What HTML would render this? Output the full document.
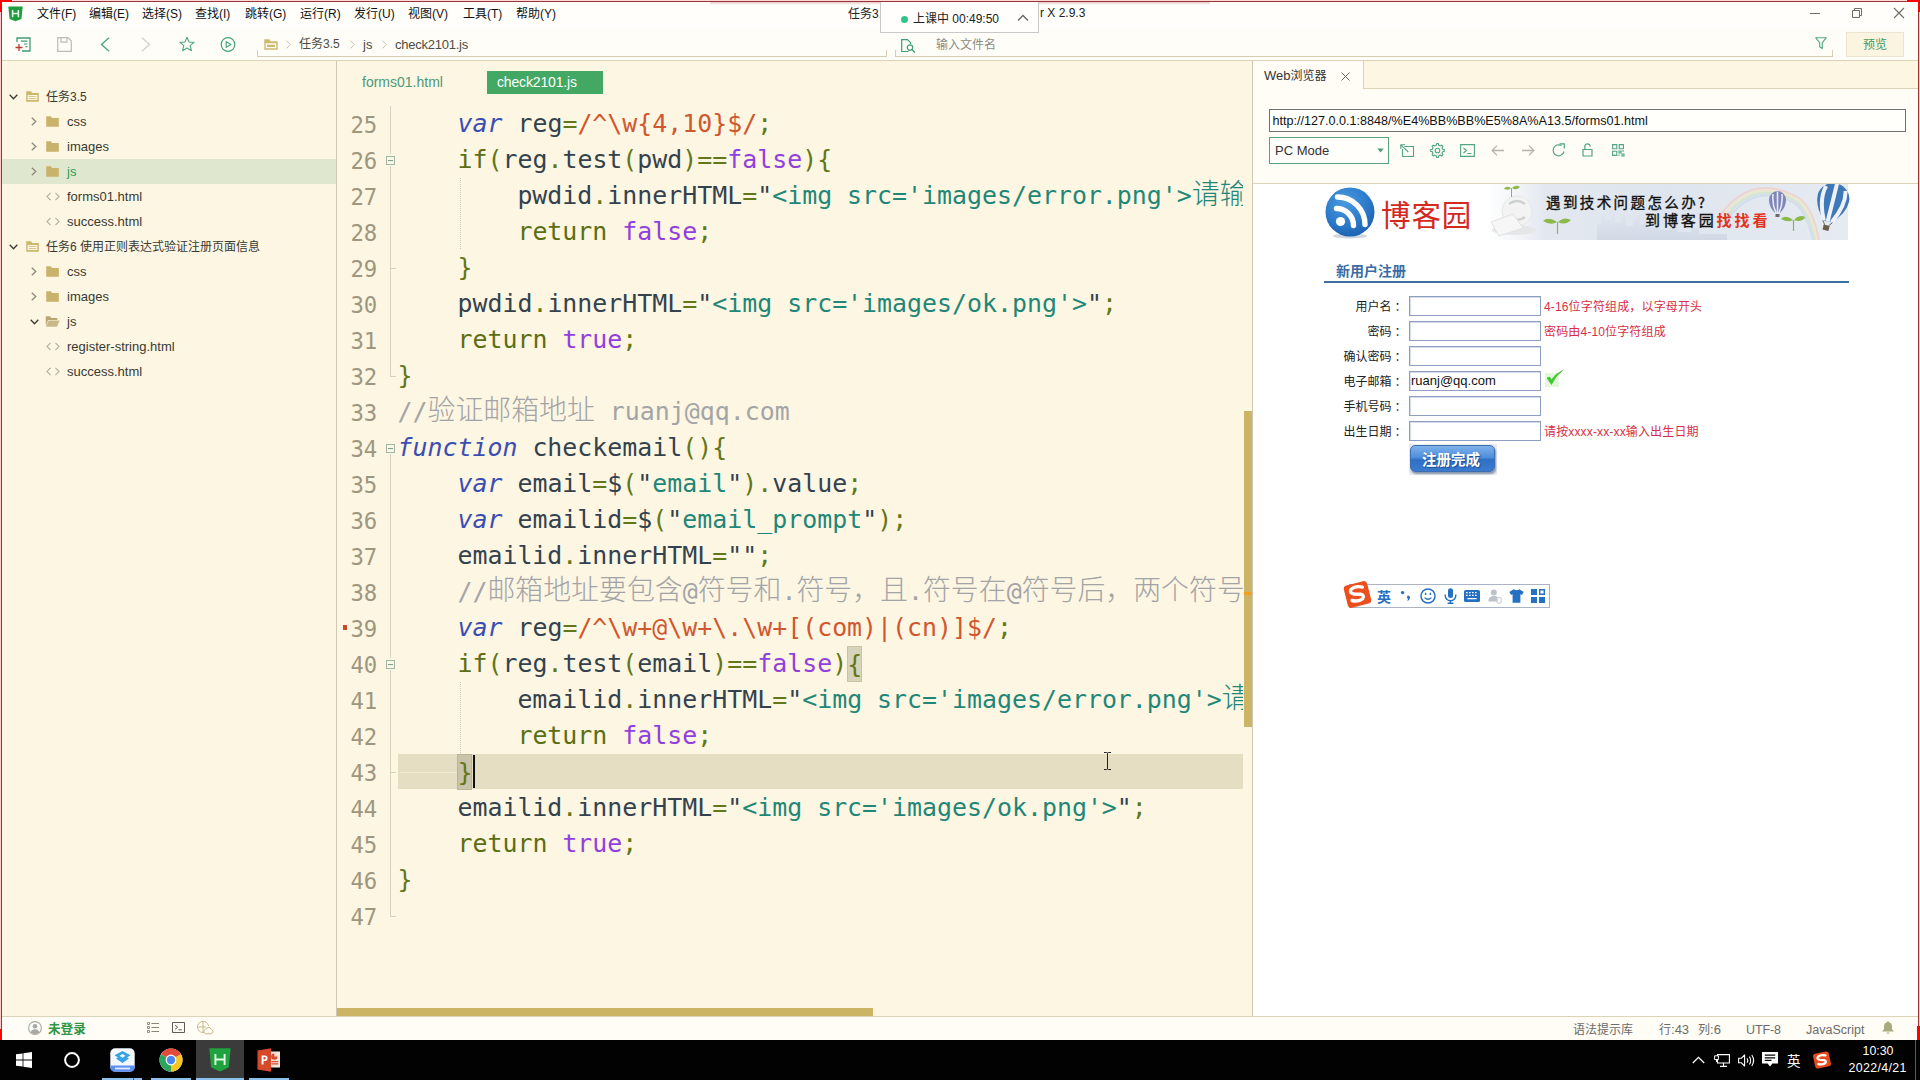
<!DOCTYPE html>
<html lang="zh-CN">
<head>
<meta charset="utf-8">
<title>HBuilder X</title>
<style>
*{box-sizing:border-box;margin:0;padding:0}
html,body{width:1920px;height:1080px;overflow:hidden;background:#fffdf6}
body{position:relative;font-family:"Liberation Sans","Noto Sans CJK SC",sans-serif;font-size:12px;color:#333}
.abs{position:absolute}
svg{position:absolute;overflow:visible}
/* ---------- frame ---------- */
#menubar{left:0;top:0;width:1920px;height:28px;background:#fffefb;z-index:5}
#toolbar{left:0;top:28px;width:1920px;height:32px;background:#fffdf7}
#hdiv{left:2px;top:60px;width:1916px;height:1px;background:#ddd3b8}
.menu{position:absolute;top:6px;font-size:12px;line-height:17px;color:#111;white-space:nowrap}
#title1{left:848px;top:6px;font-size:12px;line-height:17px;color:#222;white-space:nowrap}
#title2{left:1040px;top:5px;font-size:12px;line-height:16px;color:#222;white-space:nowrap}
#classpop{left:880px;top:0;width:159px;height:33px;background:#fffefc;border:1px solid #c9c9c9;border-top:none}
#classpop .dot{position:absolute;left:20px;top:16px;width:7px;height:7px;border-radius:50%;background:#2fc58a}
#classpop .t{position:absolute;left:32px;top:11px;font-size:12px;line-height:16px;color:#222;white-space:nowrap}
.bc{top:8px;font-size:13px;line-height:17px;color:#4c4c44;white-space:nowrap}
/* ---------- sidebar ---------- */
#sidebar{left:2px;top:61px;width:334px;height:955px;background:#fdf6e3}
#sideline{left:336px;top:61px;width:1px;height:955px;background:#cfc9b3}
.row{position:absolute;left:0;width:334px;height:25px}
.row.sel{background:#dfe8cf}
.row .tx{position:absolute;top:4px;font-size:13px;line-height:17px;color:#3a3a32;white-space:nowrap}
.row.sel .tx{color:#2f9a57}
.zh{font-size:12px !important}
.row .tx.zh{top:5px}
/* ---------- editor ---------- */
#editor{left:337px;top:61px;width:915px;height:955px;background:#fdf6e3;overflow:hidden}
#edline{left:1252px;top:61px;width:1px;height:955px;background:#cfc9b3}
.tab{position:absolute;font-size:14px;line-height:17px;white-space:nowrap}
#code{position:absolute;left:0;top:45px;width:906px;height:830px;overflow:hidden}
.ln{position:absolute;left:0;height:36px;width:906px;white-space:pre}
.num{position:absolute;left:13.5px;top:0.5px;font-family:"DejaVu Sans Mono","Liberation Mono",monospace;font-size:22.3px;line-height:36px;color:#9d977f;letter-spacing:-0.2px}
.src{position:absolute;left:60.5px;top:0;font-family:"DejaVu Sans Mono","Liberation Mono",monospace;font-size:24.9px;line-height:36px;color:#33424d;white-space:pre;letter-spacing:0}
.src i,.src b,.src u,.src s,.src em,.src q,.src a{font-style:normal;font-weight:normal;text-decoration:none}
.src .k{color:#3b4db3;font-style:italic}
.src .c{color:#5a6e12}
.src .p{color:#62771a}
.src .s{color:#1f8777}
.src .r{color:#d1572f}
.src .v{color:#9140dd}
.src .m{color:#a3a4a6}
.src .z{font-family:"Noto Sans CJK SC",sans-serif;font-size:27.9px;letter-spacing:0;line-height:0;font-weight:300}
.src .br{background:#d8d3bb;outline:1px solid #c9c3a6;outline-offset:-1px;padding:3.5px 0}
.src .br2{background:#c9c4a9;outline-color:#b9b498}
/* ---------- right panel ---------- */
#right{left:1253px;top:61px;width:665px;height:955px;background:#fffdf6}
#web{left:1254px;top:184px;width:664px;height:832px;background:#fff;overflow:hidden}
.lab{position:absolute;margin-top:1.5px;margin-left:1.5px;width:80px;text-align:right;font-family:"Liberation Sans","Noto Sans CJK SC",sans-serif;font-size:12px;line-height:16px;color:#222;white-space:nowrap}
.inp{position:absolute;left:155px;width:132px;height:20px;border:1px solid #8f9fc4;background:#fff;box-shadow:inset 1px 1px 0 #d7dcea}
.hint{position:absolute;margin-top:1.5px;left:290px;font-size:12px;line-height:16px;color:#d62f45;letter-spacing:0.15px;white-space:nowrap}
/* ---------- status & taskbar ---------- */
#status{left:2px;top:1016px;width:1916px;height:24px;background:#fffdf5;border-top:1px solid #ddd3b8}
.st{position:absolute;top:4.5px;font-size:12px;line-height:16px;color:#6b6b6b;white-space:nowrap}
#taskbar{left:0;top:1040px;width:1920px;height:40px;background:#020202}
</style>
</head>
<body>
<!-- menubar -->
<div id="menubar" class="abs">
<svg style="left:8px;top:6px" width="15" height="16" viewBox="0 0 15 17" preserveAspectRatio="none"><path d="M0.3 0.6 H14.7 L13.4 13.8 L7.5 16.2 L1.6 13.8 Z" fill="#1f9c3f"/><path d="M4.6 4.2 V12 M10.4 4.2 V12 M4.6 8 H10.4" stroke="#e9ffe9" stroke-width="1.5" fill="none"/></svg>
<span class="menu" style="left:37px">文件(F)</span>
<span class="menu" style="left:89px">编辑(E)</span>
<span class="menu" style="left:142px">选择(S)</span>
<span class="menu" style="left:195px">查找(I)</span>
<span class="menu" style="left:245px">跳转(G)</span>
<span class="menu" style="left:300px">运行(R)</span>
<span class="menu" style="left:354px">发行(U)</span>
<span class="menu" style="left:408px">视图(V)</span>
<span class="menu" style="left:463px">工具(T)</span>
<span class="menu" style="left:516px">帮助(Y)</span>
<span id="title1" class="abs" style="width:32px;overflow:hidden">任务3.5/js/check2101.js - HBuilde</span><span id="title2" class="abs">r X 2.9.3</span>
<div class="abs" style="left:710px;top:2px;width:500px;height:3px;background:linear-gradient(#e9c9c9,rgba(255,240,240,0))"></div>
<div id="classpop" class="abs"><span class="dot"></span><span class="t">上课中 00:49:50</span>
<svg style="left:136px;top:14px" width="12" height="8" viewBox="0 0 12 8"><path d="M1 6.5 L6 1.5 L11 6.5" stroke="#666" stroke-width="1.3" fill="none"/></svg></div>
<svg style="left:1810px;top:8px" width="100" height="12" viewBox="0 0 100 12"><path d="M0 5.5 H10" stroke="#6e6e64" stroke-width="1"/><path d="M42.5 2.5 H49.5 V9.5 H42.5 Z M44.5 2.5 V0.5 H51.5 V7.5 H49.5" stroke="#6e6e64" stroke-width="1" fill="none"/><path d="M84 0 L94 10 M94 0 L84 10" stroke="#6e6e64" stroke-width="1.1"/></svg>
</div>
<div id="toolbar" class="abs">
<!-- new file -->
<svg style="left:15px;top:9px" width="16" height="15" viewBox="0 0 16 15"><path d="M2 5 V1 H15 V14 H7" stroke="#3f9a7a" stroke-width="1.3" fill="none"/><path d="M6 4.2 H12.5 M9 7 H12.5 M10.5 9.6 H12.5" stroke="#3f9a7a" stroke-width="1.2"/><path d="M0.5 10.5 H7.5 M4 7 V14" stroke="#c0392b" stroke-width="1.3"/></svg>
<!-- save -->
<svg style="left:57px;top:9px" width="15" height="15" viewBox="0 0 15 15"><path d="M0.7 0.7 H11 L14.3 4 V14.3 H0.7 Z" stroke="#bcbcb2" stroke-width="1.2" fill="none"/><path d="M4 0.7 V5.2 H10 V0.7" stroke="#bcbcb2" stroke-width="1.2" fill="none"/></svg>
<!-- back / forward -->
<svg style="left:100px;top:9px" width="10" height="15" viewBox="0 0 10 15"><path d="M9 0.8 L1.5 7.5 L9 14.2" stroke="#4fa585" stroke-width="1.4" fill="none"/></svg>
<svg style="left:141px;top:9px" width="10" height="15" viewBox="0 0 10 15"><path d="M1 0.8 L8.5 7.5 L1 14.2" stroke="#d3d3cb" stroke-width="1.4" fill="none"/></svg>
<!-- star -->
<svg style="left:179px;top:8px" width="16" height="16" viewBox="0 0 16 16"><path d="M8 1.2 L10 6 L15 6.4 L11.2 9.7 L12.4 14.7 L8 12 L3.6 14.7 L4.8 9.7 L1 6.4 L6 6 Z" stroke="#4fa585" stroke-width="1.1" fill="none" stroke-linejoin="round"/></svg>
<!-- run -->
<svg style="left:220px;top:9px" width="16" height="16" viewBox="0 0 16 16"><circle cx="8" cy="7.5" r="6.8" stroke="#3fa573" stroke-width="1.2" fill="none"/><path d="M6.2 4.6 L10.8 7.5 L6.2 10.4 Z" stroke="#3fa573" stroke-width="1.1" fill="none" stroke-linejoin="round"/></svg>
<!-- address bracket -->
<div class="abs" style="left:257px;top:22px;width:1px;height:7px;background:#d6cdb0"></div>
<div class="abs" style="left:257px;top:28px;width:630px;height:1px;background:#d6cdb0"></div>
<div class="abs" style="left:886px;top:22px;width:1px;height:7px;background:#d6cdb0"></div>
<svg style="left:264px;top:11px" width="14" height="11" viewBox="0 0 14 11"><path d="M0.3 0.3 H5.2 L6.6 2.2 H13.7 V10.7 H0.3 Z" fill="#cdb96b"/><path d="M2.3 5 H11.6 V8.6 H2.3 Z" fill="none" stroke="#fffdf7" stroke-width="1.3"/></svg>
<svg style="left:286px;top:12px" width="5" height="9" viewBox="0 0 5 9"><path d="M0.6 0.6 L4.2 4.5 L0.6 8.4" stroke="#c5c2b6" stroke-width="1" fill="none"/></svg>
<span class="abs bc zh" style="left:299px">任务3.5</span>
<svg style="left:350px;top:12px" width="5" height="9" viewBox="0 0 5 9"><path d="M0.6 0.6 L4.2 4.5 L0.6 8.4" stroke="#c5c2b6" stroke-width="1" fill="none"/></svg>
<span class="abs bc" style="left:363px">js</span>
<svg style="left:382px;top:12px" width="5" height="9" viewBox="0 0 5 9"><path d="M0.6 0.6 L4.2 4.5 L0.6 8.4" stroke="#c5c2b6" stroke-width="1" fill="none"/></svg>
<span class="abs bc" style="left:395px;letter-spacing:-0.25px">check2101.js</span>
<!-- search bracket -->
<div class="abs" style="left:895px;top:22px;width:1px;height:7px;background:#d6cdb0"></div>
<div class="abs" style="left:895px;top:28px;width:938px;height:1px;background:#d6cdb0"></div>
<div class="abs" style="left:1832px;top:22px;width:1px;height:7px;background:#d6cdb0"></div>
<svg style="left:901px;top:11px" width="15" height="14" viewBox="0 0 15 14"><path d="M7.5 12.5 H0.7 V0.7 H6.5 L9.5 3.7 V5" stroke="#3f9a7a" stroke-width="1.2" fill="none"/><circle cx="9" cy="8.6" r="2.7" stroke="#3f9a7a" stroke-width="1.2" fill="none"/><path d="M11 10.7 L14 13.5" stroke="#3f9a7a" stroke-width="1.3"/></svg>
<span class="abs" style="left:936px;top:9px;font-size:12px;line-height:17px;color:#8c8c84;white-space:nowrap">输入文件名</span>
<svg style="left:1815px;top:9px" width="12" height="13" viewBox="0 0 12 13"><path d="M0.8 0.8 H11.2 L7.3 5.6 V11.6 L4.7 9.8 V5.6 Z" stroke="#4fa585" stroke-width="1.1" fill="none" stroke-linejoin="round"/></svg>
<div class="abs" style="left:1846px;top:4px;width:58px;height:25px;background:#fbf4e0;border:1px solid #ebe4cf"></div>
<span class="abs" style="left:1863px;top:9px;font-size:12px;line-height:17px;color:#3e9c63;white-space:nowrap">预览</span>
</div>
<div id="hdiv" class="abs"></div>

<!-- sidebar -->
<div id="sidebar" class="abs">
<div class="row" style="top:23px"><svg style="left:7px;top:10px" width="9" height="6" viewBox="0 0 9 6"><path d="M0.7 0.8 L4.5 4.8 L8.3 0.8" stroke="#3c3a30" stroke-width="1.3" fill="none"/></svg><svg style="left:24px;top:7px" width="13" height="11" viewBox="0 0 13 11"><path d="M0.2 0.2 H4.8 L6.2 2 H12.8 V10.8 H0.2 Z" fill="#ccb86c"/><path d="M2.2 4.6 H10.8 V8.4 H2.2 Z M2.2 6.5 H10.8" fill="none" stroke="#fdf6e3" stroke-width="1.1"/></svg><span class="tx zh" style="left:44px">任务3.5</span></div>
<div class="row" style="top:48px"><svg style="left:29px;top:8px" width="6" height="9" viewBox="0 0 6 9"><path d="M0.8 0.7 L4.8 4.5 L0.8 8.3" stroke="#8e8a78" stroke-width="1.3" fill="none"/></svg><svg style="left:44px;top:7px" width="13" height="11" viewBox="0 0 13 11"><path d="M0.2 0.2 H4.8 L6.2 2 H12.8 V10.8 H0.2 Z" fill="#c9b26a"/></svg><span class="tx" style="left:65px">css</span></div>
<div class="row" style="top:73px"><svg style="left:29px;top:8px" width="6" height="9" viewBox="0 0 6 9"><path d="M0.8 0.7 L4.8 4.5 L0.8 8.3" stroke="#8e8a78" stroke-width="1.3" fill="none"/></svg><svg style="left:44px;top:7px" width="13" height="11" viewBox="0 0 13 11"><path d="M0.2 0.2 H4.8 L6.2 2 H12.8 V10.8 H0.2 Z" fill="#c9b26a"/></svg><span class="tx" style="left:65px">images</span></div>
<div class="row sel" style="top:98px"><svg style="left:29px;top:8px" width="6" height="9" viewBox="0 0 6 9"><path d="M0.8 0.7 L4.8 4.5 L0.8 8.3" stroke="#8e8a78" stroke-width="1.3" fill="none"/></svg><svg style="left:44px;top:7px" width="13" height="11" viewBox="0 0 13 11"><path d="M0.2 0.2 H4.8 L6.2 2 H12.8 V10.8 H0.2 Z" fill="#c9b26a"/></svg><span class="tx" style="left:65px">js</span></div>
<div class="row" style="top:123px"><svg style="left:44px;top:8px" width="14" height="9" viewBox="0 0 14 9"><path d="M4.6 0.8 L0.9 4.5 L4.6 8.2 M9.4 0.8 L13.1 4.5 L9.4 8.2" stroke="#b4b09e" stroke-width="1.1" fill="none"/></svg><span class="tx" style="left:65px">forms01.html</span></div>
<div class="row" style="top:148px"><svg style="left:44px;top:8px" width="14" height="9" viewBox="0 0 14 9"><path d="M4.6 0.8 L0.9 4.5 L4.6 8.2 M9.4 0.8 L13.1 4.5 L9.4 8.2" stroke="#b4b09e" stroke-width="1.1" fill="none"/></svg><span class="tx" style="left:65px">success.html</span></div>
<div class="row" style="top:173px"><svg style="left:7px;top:10px" width="9" height="6" viewBox="0 0 9 6"><path d="M0.7 0.8 L4.5 4.8 L8.3 0.8" stroke="#3c3a30" stroke-width="1.3" fill="none"/></svg><svg style="left:24px;top:7px" width="13" height="11" viewBox="0 0 13 11"><path d="M0.2 0.2 H4.8 L6.2 2 H12.8 V10.8 H0.2 Z" fill="#ccb86c"/><path d="M2.2 4.6 H10.8 V8.4 H2.2 Z M2.2 6.5 H10.8" fill="none" stroke="#fdf6e3" stroke-width="1.1"/></svg><span class="tx zh" style="left:44px">任务6 使用正则表达式验证注册页面信息</span></div>
<div class="row" style="top:198px"><svg style="left:29px;top:8px" width="6" height="9" viewBox="0 0 6 9"><path d="M0.8 0.7 L4.8 4.5 L0.8 8.3" stroke="#8e8a78" stroke-width="1.3" fill="none"/></svg><svg style="left:44px;top:7px" width="13" height="11" viewBox="0 0 13 11"><path d="M0.2 0.2 H4.8 L6.2 2 H12.8 V10.8 H0.2 Z" fill="#c9b26a"/></svg><span class="tx" style="left:65px">css</span></div>
<div class="row" style="top:223px"><svg style="left:29px;top:8px" width="6" height="9" viewBox="0 0 6 9"><path d="M0.8 0.7 L4.8 4.5 L0.8 8.3" stroke="#8e8a78" stroke-width="1.3" fill="none"/></svg><svg style="left:44px;top:7px" width="13" height="11" viewBox="0 0 13 11"><path d="M0.2 0.2 H4.8 L6.2 2 H12.8 V10.8 H0.2 Z" fill="#c9b26a"/></svg><span class="tx" style="left:65px">images</span></div>
<div class="row" style="top:248px"><svg style="left:28px;top:10px" width="9" height="6" viewBox="0 0 9 6"><path d="M0.7 0.8 L4.5 4.8 L8.3 0.8" stroke="#3c3a30" stroke-width="1.3" fill="none"/></svg><svg style="left:43px;top:7px" width="15" height="11" viewBox="0 0 15 11"><path d="M0.8 0.3 H5 L6.3 2 H12.3 V4 H3.2 L0.8 9.6 Z" fill="#b9a772"/><path d="M3.6 4.6 H14.6 L12 10.8 H0.8 Z" fill="#c9b88a"/></svg><span class="tx" style="left:65px">js</span></div>
<div class="row" style="top:273px"><svg style="left:44px;top:8px" width="14" height="9" viewBox="0 0 14 9"><path d="M4.6 0.8 L0.9 4.5 L4.6 8.2 M9.4 0.8 L13.1 4.5 L9.4 8.2" stroke="#b4b09e" stroke-width="1.1" fill="none"/></svg><span class="tx" style="left:65px">register-string.html</span></div>
<div class="row" style="top:298px"><svg style="left:44px;top:8px" width="14" height="9" viewBox="0 0 14 9"><path d="M4.6 0.8 L0.9 4.5 L4.6 8.2 M9.4 0.8 L13.1 4.5 L9.4 8.2" stroke="#b4b09e" stroke-width="1.1" fill="none"/></svg><span class="tx" style="left:65px">success.html</span></div>
</div>
<div id="sideline" class="abs"></div>

<!-- editor -->
<div id="editor" class="abs">
<span class="tab" style="left:25px;top:13px;color:#4b9a79">forms01.html</span>
<div class="abs" style="left:150px;top:10px;width:116px;height:23px;background:#43a863"></div>
<span class="tab" style="left:160px;top:13px;color:#fff;letter-spacing:-0.15px">check2101.js</span>
<div id="code">
<div class="abs" style="left:61px;top:648px;width:845px;height:35px;background:#e5dec2"></div>
<div class="abs" style="left:53px;top:0px;width:1px;height:48px;background:#d8d1b9"></div>
<div class="abs" style="left:49px;top:50px;width:9px;height:9px;border:1px solid #9fb8a8;background:#fdf6e3"><div style="position:absolute;left:1px;top:3px;width:5px;height:1px;background:#7fa08c"></div></div>
<div class="abs" style="left:53px;top:60px;width:1px;height:210px;background:#d8d1b9"></div>
<div class="abs" style="left:53px;top:162px;width:6px;height:1px;background:#d8d1b9"></div>
<div class="abs" style="left:53px;top:270px;width:6px;height:1px;background:#d8d1b9"></div>
<div class="abs" style="left:49px;top:338px;width:9px;height:9px;border:1px solid #9fb8a8;background:#fdf6e3"><div style="position:absolute;left:1px;top:3px;width:5px;height:1px;background:#7fa08c"></div></div>
<div class="abs" style="left:53px;top:348px;width:1px;height:204px;background:#d8d1b9"></div>
<div class="abs" style="left:49px;top:554px;width:9px;height:9px;border:1px solid #9fb8a8;background:#fdf6e3"><div style="position:absolute;left:1px;top:3px;width:5px;height:1px;background:#7fa08c"></div></div>
<div class="abs" style="left:53px;top:564px;width:1px;height:246px;background:#d8d1b9"></div>
<div class="abs" style="left:53px;top:666px;width:6px;height:1px;background:#d8d1b9"></div>
<div class="abs" style="left:53px;top:810px;width:6px;height:1px;background:#d8d1b9"></div>
<div class="abs" style="left:123px;top:72px;width:1px;height:72px;background:repeating-linear-gradient(#cfc8b0 0 1px,transparent 1px 2px)"></div>
<div class="abs" style="left:123px;top:576px;width:1px;height:72px;background:repeating-linear-gradient(#cfc8b0 0 1px,transparent 1px 2px)"></div>
<div class="abs" style="left:63px;top:666px;width:57px;height:1px;background:#efe9d2"></div>
<div class="abs" style="left:136px;top:649px;width:2px;height:33px;background:#111"></div>
<div class="abs" style="left:6px;top:519px;width:4px;height:5px;background:#c8492c"></div>
<div class="ln" style="top:0px"><span class="num">25</span><span class="src">    <i class="k">var</i> reg<i class="p">=</i><i class="r">/^\w{4,10}$/</i><i class="p">;</i></span></div>
<div class="ln" style="top:36px"><span class="num">26</span><span class="src">    <i class="c">if</i><i class="p">(</i>reg<i class="p">.</i>test<i class="p">(</i>pwd<i class="p">)==</i><i class="v">false</i><i class="p">){</i></span></div>
<div class="ln" style="top:72px"><span class="num">27</span><span class="src">        pwdid<i class="p">.</i>innerHTML<i class="p">=</i>"<i class="s">&lt;img src='images/error.png'&gt;</i><i class="s z">请输入4</i></span></div>
<div class="ln" style="top:108px"><span class="num">28</span><span class="src">        <i class="c">return</i> <i class="v">false</i><i class="p">;</i></span></div>
<div class="ln" style="top:144px"><span class="num">29</span><span class="src">    <i class="p">}</i></span></div>
<div class="ln" style="top:180px"><span class="num">30</span><span class="src">    pwdid<i class="p">.</i>innerHTML<i class="p">=</i>"<i class="s">&lt;img src='images/ok.png'&gt;</i>"<i class="p">;</i></span></div>
<div class="ln" style="top:216px"><span class="num">31</span><span class="src">    <i class="c">return</i> <i class="v">true</i><i class="p">;</i></span></div>
<div class="ln" style="top:252px"><span class="num">32</span><span class="src"><i class="p">}</i></span></div>
<div class="ln" style="top:288px"><span class="num">33</span><span class="src"><i class="m">//</i><i class="m z">验证邮箱地址</i><i class="m"> ruanj@qq.com</i></span></div>
<div class="ln" style="top:324px"><span class="num">34</span><span class="src"><i class="k">function</i> checkemail<i class="p">(){</i></span></div>
<div class="ln" style="top:360px"><span class="num">35</span><span class="src">    <i class="k">var</i> email<i class="p">=</i>$<i class="p">(</i>"<i class="s">email</i>"<i class="p">).</i>value<i class="p">;</i></span></div>
<div class="ln" style="top:396px"><span class="num">36</span><span class="src">    <i class="k">var</i> emailid<i class="p">=</i>$<i class="p">(</i>"<i class="s">email_prompt</i>"<i class="p">);</i></span></div>
<div class="ln" style="top:432px"><span class="num">37</span><span class="src">    emailid<i class="p">.</i>innerHTML<i class="p">=</i>""<i class="p">;</i></span></div>
<div class="ln" style="top:468px"><span class="num">38</span><span class="src">    <i class="m">//</i><i class="m z">邮箱地址要包含</i><i class="m">@</i><i class="m z">符号和</i><i class="m">.</i><i class="m z">符号，且</i><i class="m">.</i><i class="m z">符号在</i><i class="m">@</i><i class="m z">符号后，两个符号之间</i></span></div>
<div class="ln" style="top:504px"><span class="num">39</span><span class="src">    <i class="k">var</i> reg<i class="p">=</i><i class="r">/^\w+@\w+\.\w+[(com)|(cn)]$/</i><i class="p">;</i></span></div>
<div class="ln" style="top:540px"><span class="num">40</span><span class="src">    <i class="c">if</i><i class="p">(</i>reg<i class="p">.</i>test<i class="p">(</i>email<i class="p">)==</i><i class="v">false</i><i class="p">)</i><i class="p br">{</i></span></div>
<div class="ln" style="top:576px"><span class="num">41</span><span class="src">        emailid<i class="p">.</i>innerHTML<i class="p">=</i>"<i class="s">&lt;img src='images/error.png'&gt;</i><i class="s z">请输入</i></span></div>
<div class="ln" style="top:612px"><span class="num">42</span><span class="src">        <i class="c">return</i> <i class="v">false</i><i class="p">;</i></span></div>
<div class="ln" style="top:648px"><span class="num">43</span><span class="src">    <i class="p br br2">}</i></span></div>
<div class="ln" style="top:684px"><span class="num">44</span><span class="src">    emailid<i class="p">.</i>innerHTML<i class="p">=</i>"<i class="s">&lt;img src='images/ok.png'&gt;</i>"<i class="p">;</i></span></div>
<div class="ln" style="top:720px"><span class="num">45</span><span class="src">    <i class="c">return</i> <i class="v">true</i><i class="p">;</i></span></div>
<div class="ln" style="top:756px"><span class="num">46</span><span class="src"><i class="p">}</i></span></div>
<div class="ln" style="top:792px"><span class="num">47</span><span class="src"></span></div>
</div>
<div class="abs" style="left:907px;top:350px;width:8px;height:316px;background:#cbb463"></div>
<div class="abs" style="left:907px;top:531px;width:9px;height:3px;background:#f0a020"></div>
<div class="abs" style="left:0;top:947px;width:536px;height:8px;background:#cbb463"></div>

<svg style="left:766px;top:691px" width="9" height="18" viewBox="0 0 9 18"><path d="M1 0.5 H3.5 Q4.5 0.5 4.5 1.5 Q4.5 0.5 5.5 0.5 H8 M4.5 1.5 V16.5 M1 17.5 H3.5 Q4.5 17.5 4.5 16.5 Q4.5 17.5 5.5 17.5 H8" stroke="#222" stroke-width="1" fill="none"/></svg>
</div>
<div id="edline" class="abs"></div>

<!-- right -->
<div id="right" class="abs">
<div class="abs" style="left:110px;top:0;width:555px;height:28px;background:#fdf6e3;border-left:1px solid #ddd3b8;border-bottom:1px solid #ddd3b8"></div>
<span class="abs" style="left:11px;top:6px;font-size:13px;line-height:17px;color:#333;white-space:nowrap">Web<span class="zh">浏览器</span></span>
<svg style="left:88px;top:11px" width="9" height="9" viewBox="0 0 9 9"><path d="M0.5 0.5 L8.5 8.5 M8.5 0.5 L0.5 8.5" stroke="#666" stroke-width="1"/></svg>
<div class="abs" style="left:16px;top:48px;width:637px;height:23px;background:#fffffc;border:1px solid #707070"></div>
<span class="abs" style="left:19.5px;top:52px;font-size:12.6px;line-height:17px;color:#111;white-space:nowrap;letter-spacing:0">http://127.0.0.1:8848/%E4%BB%BB%E5%8A%A13.5/forms01.html</span>
<div class="abs" style="left:16px;top:76px;width:120px;height:27px;background:#fffefa;border:1px solid #55a27e"></div>
<span class="abs" style="left:22px;top:81px;font-size:13px;line-height:17px;color:#333;white-space:nowrap">PC Mode</span>
<svg style="left:124px;top:87px" width="7" height="5" viewBox="0 0 7 5"><path d="M0.3 0.5 H6.7 L3.5 4.5 Z" fill="#4f9a78"/></svg>
<svg style="left:147px;top:83px" width="15" height="13" viewBox="0 0 15 13"><path d="M4.5 2.5 H13.5 V12.5 H2.5 V5" stroke="#4fa585" stroke-width="1.1" fill="none"/><path d="M0.8 0.8 L8.3 8 M0.8 5 V0.8 H5.2" stroke="#4fa585" stroke-width="1.1" fill="none"/></svg>
<svg style="left:177px;top:82px" width="15" height="15" viewBox="0 0 15 15"><path d="M6.26 2.35 L6.64 0.65 L8.36 0.65 L8.74 2.35 L10.27 2.98 L11.73 2.05 L12.95 3.27 L12.02 4.73 L12.65 6.26 L14.35 6.64 L14.35 8.36 L12.65 8.74 L12.02 10.27 L12.95 11.73 L11.73 12.95 L10.27 12.02 L8.74 12.65 L8.36 14.35 L6.64 14.35 L6.26 12.65 L4.73 12.02 L3.27 12.95 L2.05 11.73 L2.98 10.27 L2.35 8.74 L0.65 8.36 L0.65 6.64 L2.35 6.26 L2.98 4.73 L2.05 3.27 L3.27 2.05 L4.73 2.98 Z" stroke="#4fa585" stroke-width="1.1" fill="none" stroke-linejoin="round"/><circle cx="7.5" cy="7.5" r="2.3" stroke="#4fa585" stroke-width="1.1" fill="none"/></svg>
<svg style="left:207px;top:83px" width="15" height="13" viewBox="0 0 15 13"><path d="M0.6 0.6 H14.4 V12.4 H0.6 Z" stroke="#4fa585" stroke-width="1.1" fill="none"/><path d="M3.5 4 L6.5 6.5 L3.5 9 M7.5 9.5 H11.5" stroke="#4fa585" stroke-width="1.1" fill="none"/></svg>
<svg style="left:238px;top:83px" width="14" height="13" viewBox="0 0 14 13"><path d="M13 6.5 H1.2 M6 1.6 L1.2 6.5 L6 11.4" stroke="#b5b5ad" stroke-width="1.3" fill="none"/></svg>
<svg style="left:268px;top:83px" width="14" height="13" viewBox="0 0 14 13"><path d="M1 6.5 H12.8 M8 1.6 L12.8 6.5 L8 11.4" stroke="#b5b5ad" stroke-width="1.3" fill="none"/></svg>
<svg style="left:299px;top:82px" width="13" height="14" viewBox="0 0 13 14"><path d="M12 8.5 A5.5 5.5 0 1 1 9.5 2.6" stroke="#4fa585" stroke-width="1.2" fill="none"/><path d="M7.5 0.8 H12.3 V5.4" stroke="#4fa585" stroke-width="1.2" fill="none"/></svg>
<svg style="left:329px;top:82px" width="11" height="14" viewBox="0 0 11 14"><path d="M1 6.5 H10 V13 H1 Z" stroke="#4fa585" stroke-width="1.2" fill="none"/><path d="M2.8 6.5 V3.6 A2.7 2.7 0 0 1 8.2 3.4" stroke="#4fa585" stroke-width="1.2" fill="none"/></svg>
<svg style="left:359px;top:83px" width="12" height="12" viewBox="0 0 12 12"><path d="M0.6 0.6 H4.8 V4.8 H0.6 Z M7.2 0.6 H11.4 V4.8 H7.2 Z M0.6 7.2 H4.8 V11.4 H0.6 Z" stroke="#4fa585" stroke-width="1.1" fill="none"/><path d="M7 7 H9 V9 H7 Z M10 10 H12 V12 H10 Z M10 7 H12 M7 10.5 V12" stroke="#4fa585" stroke-width="1.1" fill="none"/></svg>
<div class="abs" style="left:0;top:122px;width:665px;height:1px;background:#ddd3b8"></div>
</div>
<div id="web" class="abs">
<!-- logo -->
<svg style="left:71px;top:2px" width="52" height="54" viewBox="0 0 52 54">
<defs><radialGradient id="lg" cx="0.4" cy="0.3" r="0.8"><stop offset="0" stop-color="#4a9ae0"/><stop offset="0.6" stop-color="#2a78c8"/><stop offset="1" stop-color="#1a5aa8"/></radialGradient></defs>
<ellipse cx="25" cy="50" rx="17" ry="2.5" fill="#cfd6de"/>
<circle cx="25" cy="26" r="24.5" fill="url(#lg)"/>
<circle cx="15.5" cy="35.5" r="4.6" fill="#fff"/>
<path d="M11.5 22.5 A17 17 0 0 1 28.5 39.5" stroke="#fff" stroke-width="5.4" fill="none" stroke-linecap="round"/>
<path d="M12.5 11 A27.5 27.5 0 0 1 40 38.5" stroke="#fff" stroke-width="5.4" fill="none" stroke-linecap="round"/>
</svg>
<span class="abs" style="left:127px;top:7.5px;font-family:'Noto Sans CJK SC',sans-serif;font-size:29.5px;line-height:42px;color:#d3291f;white-space:nowrap;font-weight:400;letter-spacing:0.9px">博客园</span>
<!-- banner -->
<div class="abs" style="left:233px;top:0;width:361px;height:56px;background:linear-gradient(90deg,#fff 0,#f3f5f8 8%,#e3e8f0 16%,#dfe5ee 50%,#e6ebf2 100%)"></div>
<svg style="left:233px;top:0" width="361" height="56" viewBox="0 0 361 56">
<defs><linearGradient id="sky" x1="0" y1="0" x2="0" y2="1"><stop offset="0" stop-color="#cdd6e4" stop-opacity="0"/><stop offset="1" stop-color="#c3cddd" stop-opacity="0.55"/></linearGradient></defs>
<path d="M110 56 V40 H114 V30 H118 V36 H124 V26 H128 V38 H134 V30 H139 V42 H146 V34 H150 V28 H153 V40 H160 V44 H168 V36 H173 V46 H184 V40 H190 V48 H204 V44 H212 V50 H240 V56 Z" fill="url(#sky)"/>
<!-- paper globe -->
<ellipse cx="27" cy="46" rx="22" ry="5" fill="#e4e6e8"/>
<circle cx="30" cy="27" r="15" fill="#f3f3f3" stroke="#e6e6e6" stroke-width="1"/>
<path d="M22 20 Q30 14 38 20 M22 33 Q30 39 38 33" stroke="#cfd2d2" stroke-width="2.5" fill="none"/>
<path d="M4 38 L26 30 L36 44 L12 52 Z" fill="#f6f6f6" stroke="#e2e2e2" stroke-width="1"/>
<!-- sprouts -->
<path d="M24 4 q-5 -3 -7 1 q5 2 7 -1 z M25 4 q4 -4 8 -1 q-4 4 -8 1 z" fill="#8db84a"/><path d="M24.5 4 V13" stroke="#9aa86a" stroke-width="1"/>
<path d="M70 38 q-9 -6 -14 -1 q8 5 14 1 z M71 38 q6 -6 13 -2 q-6 6 -13 2 z" fill="#8db84a"/><path d="M70.5 38 V50" stroke="#9aa86a" stroke-width="1.2"/>
<path d="M306 36 q-8 -6 -12 -1 q7 4 12 1 z M307 36 q5 -6 12 -3 q-5 6 -12 3 z" fill="#8db84a"/><path d="M306.5 36 V47" stroke="#9aa86a" stroke-width="1.2"/>
<!-- rainbow -->
<path d="M230 36 Q262 -14 312 14 Q326 24 332 56" stroke="#f4c6c0" stroke-width="2" fill="none" opacity="0.6"/>
<path d="M232 38 Q263 -11 311 16 Q324 26 330 56" stroke="#f3e6b4" stroke-width="2" fill="none" opacity="0.6"/>
<path d="M234 40 Q264 -8 310 18 Q322 28 328 56" stroke="#c9e3c2" stroke-width="2" fill="none" opacity="0.6"/>
<path d="M236 42 Q265 -5 309 20 Q320 30 326 56" stroke="#c4d4ee" stroke-width="2" fill="none" opacity="0.6"/>
<!-- balloons -->
<path d="M282 16 a8.5 9 0 0 1 17 0 q0 7 -6 13 h-5 q-6 -6 -6 -13 z" fill="#7f86b8"/><path d="M286 10 q-1 10 3 19 M290.5 7.5 V29 M295 10 q1 10 -3 19" stroke="#e6e8f4" stroke-width="1.6" fill="none"/><rect x="288.5" y="30" width="4" height="3" fill="#6a6a72"/>
<g transform="rotate(14 345 20)"><path d="M329 14 a16 15 0 0 1 32 0 q0 12 -12 24 h-8 q-12 -12 -12 -24 z" fill="#3f78b8"/><path d="M335 4 q-4 14 6 34 M345 -1 V38 M355 4 q4 14 -6 34" stroke="#eef2f8" stroke-width="4" fill="none"/><rect x="342" y="42" width="6" height="5" fill="#6a5a4a"/><path d="M340 38 L343 42 M350 38 L347 42" stroke="#555" stroke-width="0.8"/></g>
</svg>
<span class="abs" style="left:292px;top:7px;font-size:14.5px;line-height:22px;letter-spacing:2.4px;color:#111;font-weight:400;-webkit-text-stroke:0.35px #111;white-space:nowrap;font-family:'Noto Sans CJK SC',sans-serif">遇到技术问题怎么办?</span>
<span class="abs" style="left:391px;top:25px;font-size:15px;line-height:22px;letter-spacing:2.9px;color:#111;font-weight:400;-webkit-text-stroke:0.35px #111;white-space:nowrap;font-family:'Noto Sans CJK SC',sans-serif">到博客园<span style="color:#e23322;font-weight:700;-webkit-text-stroke:0">找找看</span></span>
<!-- heading -->
<span class="abs" style="left:82px;top:77px;font-size:14px;line-height:18px;font-weight:700;color:#3b6ca3;white-space:nowrap;font-family:'Noto Sans CJK SC',sans-serif">新用户注册</span>
<div class="abs" style="left:70px;top:97px;width:525px;height:2px;background:#3f6f9f"></div>
<span class="lab" style="left:68px;top:113px">用户名<span style="position:relative;left:3px">：</span></span>
<div class="inp" style="top:112px"></div>
<span class="hint" style="top:113px">4-16位字符组成，以字母开头</span>
<span class="lab" style="left:68px;top:138px">密码<span style="position:relative;left:3px">：</span></span>
<div class="inp" style="top:137px"></div>
<span class="hint" style="top:138px">密码由4-10位字符组成</span>
<span class="lab" style="left:68px;top:163px">确认密码<span style="position:relative;left:3px">：</span></span>
<div class="inp" style="top:162px"></div>
<span class="lab" style="left:68px;top:188px">电子邮箱<span style="position:relative;left:3px">：</span></span>
<div class="inp" style="top:187px"><span style="position:absolute;left:1px;top:0;font-family:'Liberation Sans',sans-serif;font-size:13px;line-height:17px;color:#111">ruanj@qq.com</span></div>
<span class="lab" style="left:68px;top:213px">手机号码<span style="position:relative;left:3px">：</span></span>
<div class="inp" style="top:212px"></div>
<span class="lab" style="left:68px;top:238px">出生日期<span style="position:relative;left:3px">：</span></span>
<div class="inp" style="top:237px"></div>
<span class="hint" style="top:238px">请按xxxx-xx-xx输入出生日期</span>
<!-- check -->
<div class="abs" style="left:291px;top:189px;width:14px;height:14px;background:#e4f6dc"></div>
<svg style="left:291px;top:185px" width="19" height="19" viewBox="0 0 19 19"><path d="M2 9 L6.5 15.5 Q10 7 17.5 1.5 Q10 5 6.5 11 L4.5 8 Z" fill="#3fc72e" stroke="#3fc72e" stroke-width="0.8" stroke-linejoin="round"/></svg>
<!-- ime toolbar -->
<div class="abs" style="left:95px;top:400px;width:201px;height:24px;background:#fff;border:1px solid #a9b4c6"></div>
<svg style="left:88px;top:395px" width="31" height="31" viewBox="0 0 31 31"><g transform="rotate(-14 15.5 15.5)"><rect x="3.5" y="4" width="24" height="23" rx="3.5" fill="#ea4f1e"/><path d="M22 9.5 Q15.5 6.2 10.6 9 Q7.4 12 12.4 14.2 L18.6 16 Q22.6 18 19.4 20.8 Q14.6 23.2 8.8 20" stroke="#fff" stroke-width="3.4" fill="none" stroke-linecap="round"/></g></svg>
<span class="abs" style="left:123px;top:402px;font-size:14px;line-height:20px;font-weight:700;color:#2470c2;white-space:nowrap;font-family:'Noto Sans CJK SC',sans-serif">英</span>
<svg style="left:146px;top:405px" width="12" height="14" viewBox="0 0 12 14"><circle cx="2.6" cy="3.6" r="1.7" fill="#2470c2"/><path d="M7.6 6.4 Q10.6 6.4 9.8 9.4 Q9.2 11.4 7 12 Q8.6 10.4 7.6 9.4 Q6.2 8.4 7.6 6.4 Z" fill="#2470c2"/></svg>
<svg style="left:166px;top:404px" width="16" height="16" viewBox="0 0 16 16"><circle cx="8" cy="8" r="7" stroke="#2470c2" stroke-width="1.5" fill="none"/><path d="M5.6 4.8 V7 M10.4 4.8 V7" stroke="#2470c2" stroke-width="1.4"/><path d="M4.6 9.6 Q8 13 11.4 9.6" stroke="#2470c2" stroke-width="1.3" fill="none"/></svg>
<svg style="left:190px;top:404px" width="13" height="16" viewBox="0 0 13 16"><rect x="4" y="0.3" width="5" height="9.6" rx="2.5" fill="#2470c2"/><path d="M1.2 6.6 V7.4 A5.3 5.3 0 0 0 11.8 7.4 V6.6" stroke="#2470c2" stroke-width="1.4" fill="none"/><path d="M6.5 12.6 V15 M3.6 15.3 H9.4" stroke="#2470c2" stroke-width="1.4"/></svg>
<svg style="left:210px;top:406px" width="16" height="12" viewBox="0 0 16 12"><rect x="0" y="0" width="16" height="12" rx="1.5" fill="#2470c2"/><path d="M2 2.6 H3.6 M5 2.6 H6.6 M8 2.6 H9.6 M11 2.6 H12.6 M2 5.4 H3.6 M5 5.4 H6.6 M8 5.4 H9.6 M11 5.4 H12.6 M3.4 8.6 H12.6" stroke="#fff" stroke-width="1.4"/></svg>
<svg style="left:234px;top:405px" width="14" height="15" viewBox="0 0 14 15"><circle cx="5.8" cy="3.4" r="3" fill="#bcc2cc"/><path d="M0.4 12.5 Q0.4 7 5.8 7 Q11.2 7 11.2 12.5 Z" fill="#bcc2cc"/><rect x="9" y="8.6" width="4.2" height="5.6" rx="0.8" fill="#fff" stroke="#bcc2cc" stroke-width="0.9"/></svg>
<svg style="left:255px;top:405px" width="15" height="14" viewBox="0 0 15 14"><path d="M4.6 0.3 Q7.5 2.4 10.4 0.3 L14.7 3 L12.8 6 L11.4 5.2 V13.7 H3.6 V5.2 L2.2 6 L0.3 3 Z" fill="#2470c2"/></svg>
<svg style="left:277px;top:405px" width="14" height="14" viewBox="0 0 14 14"><path d="M0 0 H6 V6 H0 Z M0 8 H6 V14 H0 Z M8 8 H14 V14 H8 Z" fill="#2470c2"/><path d="M8.7 0.7 H13.3 V5.3 H8.7 Z" fill="none" stroke="#2470c2" stroke-width="1.4"/></svg>
<!-- button -->
<div class="abs" style="left:155px;top:260px;width:88px;height:31px;background:#e9ebf0"></div>
<div class="abs" style="left:156px;top:261px;width:85px;height:27px;border-radius:5px;border:1px solid #3c6eb0;background:linear-gradient(#7fb1ea 0,#4f8fdc 45%,#2f6fc4 55%,#3a7ad0 100%);box-shadow:1px 2px 2px #8a94a8"></div>
<span class="abs" style="left:168px;top:265px;font-size:14.5px;line-height:19px;font-weight:700;color:#fff;white-space:nowrap;text-shadow:1px 1px 1px #1f4f90;font-family:'Noto Sans CJK SC',sans-serif">注册完成</span>
</div>

<!-- status -->
<div id="status" class="abs">
<svg style="left:26px;top:4px" width="14" height="14" viewBox="0 0 14 14"><circle cx="7" cy="7" r="6.4" stroke="#a9a9a3" stroke-width="1.1" fill="#fbfbf7"/><circle cx="7" cy="5.3" r="2.3" fill="#a9a9a3"/><path d="M2.8 11.6 Q3.2 8.2 7 8.2 Q10.8 8.2 11.2 11.6 Q9.4 13.2 7 13.2 Q4.6 13.2 2.8 11.6 Z" fill="#a9a9a3"/></svg>
<span class="abs" style="left:46px;top:1.5px;font-size:12.6px;line-height:17px;font-weight:700;color:#2f9645;white-space:nowrap;font-family:'Noto Sans CJK SC',sans-serif">未登录</span>
<svg style="left:145px;top:5px" width="12" height="11" viewBox="0 0 12 11"><path d="M0.5 0.5 H2.5 V2.5 H0.5 Z M0.5 4.5 H2.5 V6.5 H0.5 Z M0.5 8.5 H2.5 V10.5 H0.5 Z" stroke="#8a8674" stroke-width="0.9" fill="none"/><path d="M4.5 1.5 H12 M4.5 5.5 H12 M4.5 9.5 H12" stroke="#8a8674" stroke-width="1"/></svg>
<svg style="left:170px;top:5px" width="13" height="11" viewBox="0 0 13 11"><path d="M0.5 0.5 H12.5 V10.5 H0.5 Z" stroke="#5e5c50" stroke-width="1" fill="none"/><path d="M3 3 L5.6 5.2 L3 7.4 M6.5 7.8 H9.8" stroke="#5e5c50" stroke-width="1" fill="none"/></svg>
<svg style="left:195px;top:4px" width="17" height="14" viewBox="0 0 17 14"><path d="M8 11.2 A5.6 5.6 0 1 1 11.6 5" stroke="#c8b98c" stroke-width="1" fill="none"/><path d="M6 0.8 V11 M0.6 6 H9" stroke="#c8b98c" stroke-width="1" fill="none"/><path d="M8.5 12.8 H14 A2.3 2.3 0 0 0 14.2 8.3 A3 3 0 0 0 8.6 8.4 A2.3 2.3 0 0 0 8.5 12.8 Z" stroke="#c8b98c" stroke-width="1" fill="#fffdf5"/></svg>
<span class="st zh" style="left:1571px">语法提示库</span>
<span class="st" style="left:1657px;font-size:13px"><span class="zh">行</span>:43</span>
<span class="st" style="left:1696px;font-size:13px"><span class="zh">列</span>:6</span>
<span class="st" style="left:1744px;font-size:12.5px;letter-spacing:-0.1px">UTF-8</span>
<span class="st" style="left:1804px;font-size:12.5px">JavaScript</span>
<svg style="left:1880px;top:4px" width="12" height="13" viewBox="0 0 12 13"><path d="M6 0.3 Q6.8 0.3 6.9 1.2 Q10 2 10 5.5 V8.2 L11.7 10 V10.6 H0.3 V10 L2 8.2 V5.5 Q2 2 5.1 1.2 Q5.2 0.3 6 0.3 Z" fill="#a7aa7c"/><path d="M4.6 11.4 H7.4 Q7.2 12.7 6 12.7 Q4.8 12.7 4.6 11.4 Z" fill="#a7aa7c"/></svg>
</div>
<div id="taskbar" class="abs">
<div class="abs" style="left:196px;top:0;width:48px;height:38px;background:#3b3b3b"></div>
<!-- start -->
<svg style="left:16px;top:12px" width="16" height="16" viewBox="0 0 16 16"><path d="M0 2.3 L6.6 1.4 V7.6 H0 Z M7.4 1.3 L16 0 V7.6 H7.4 Z M0 8.4 H6.6 V14.6 L0 13.7 Z M7.4 8.4 H16 V16 L7.4 14.7 Z" fill="#fff"/></svg>
<!-- cortana -->
<svg style="left:64px;top:12px" width="16" height="16" viewBox="0 0 16 16"><circle cx="8" cy="8" r="6.9" stroke="#fff" stroke-width="2" fill="none"/></svg>
<!-- app1 -->
<svg style="left:110px;top:8px" width="25" height="24" viewBox="0 0 25 24"><rect x="0.3" y="0.3" width="24.4" height="23.4" rx="5" fill="#f4f8ff"/><path d="M0.3 17.5 H24.7 V19 Q24.7 23.7 19.7 23.7 H5.3 Q0.3 23.7 0.3 19 Z" fill="#5d8ff0"/><path d="M12.5 3 L20.5 7.2 L17 9.4 L19 10.6 L12.5 15 L6 10.6 L8 9.4 L4.5 7.2 Z" fill="#34a3e6"/><path d="M12.5 6 L15.5 7.8 L12.5 9.8 L9.5 7.8 Z" fill="#f4f8ff"/><path d="M5 19.6 H20 V21.4 H5 Z" fill="#dfe9ff"/></svg>
<!-- chrome -->
<svg style="left:159px;top:8px" width="24" height="24" viewBox="0 0 24 24"><circle cx="12" cy="12" r="11.5" fill="#fff"/><path d="M12 12 L2.04 6.25 A11.5 11.5 0 0 1 21.96 6.25 Z" fill="#e24a3c"/><path d="M12 12 L21.96 6.25 A11.5 11.5 0 0 1 12 23.5 Z" fill="#f7c623"/><path d="M12 12 L12 23.5 A11.5 11.5 0 0 1 2.04 6.25 Z" fill="#2ea55a"/><circle cx="12" cy="12" r="5.4" fill="#fff"/><circle cx="12" cy="12" r="4.2" fill="#4a88ee"/></svg>
<!-- hbuilder -->
<svg style="left:209px;top:8px" width="22" height="24" viewBox="0 0 22 24"><path d="M0.3 0.3 H21.7 L19.8 19.6 L11 23.6 L2.2 19.6 Z" fill="#1fa23f"/><path d="M6.4 6 V17 M15.6 6 V17 M6.4 11.5 H15.6" stroke="#e6ffe6" stroke-width="1.9" fill="none"/></svg>
<!-- ppt -->
<svg style="left:257px;top:8px" width="24" height="24" viewBox="0 0 24 24"><path d="M12 3.5 H23 V19.5 H12 Z" fill="#f6e4dc"/><circle cx="17.3" cy="8.6" r="3.2" fill="#d6492a"/><path d="M17.3 8.6 V5.2 A3.4 3.4 0 0 1 20.7 8.6 Z" fill="#f6e4dc"/><path d="M14.5 13.6 H21.3 M14.5 15.8 H21.3" stroke="#d6492a" stroke-width="1.2"/><path d="M0.5 2.6 L14 0.3 V23.7 L0.5 21.4 Z" fill="#d6492a"/><path d="M4.6 7.5 H7.6 Q10.6 7.5 10.6 10.2 Q10.6 13 7.4 13 H6.5 V16.5 H4.6 Z M6.5 9 V11.5 H7.4 Q8.7 11.5 8.7 10.2 Q8.7 9 7.4 9 Z" fill="#fff" fill-rule="evenodd"/></svg>
<!-- underlines -->
<div class="abs" style="left:102px;top:38px;width:40px;height:2px;background:#8ec0ee"></div>
<div class="abs" style="left:133px;top:38px;width:1px;height:2px;background:#3a5a7a"></div>
<div class="abs" style="left:151px;top:38px;width:40px;height:2px;background:#8ec0ee"></div>
<div class="abs" style="left:196px;top:38px;width:48px;height:2px;background:#8ec0ee"></div>
<div class="abs" style="left:249px;top:38px;width:40px;height:2px;background:#8ec0ee"></div>
<!-- tray -->
<svg style="left:1692px;top:16px" width="13" height="8" viewBox="0 0 13 8"><path d="M0.8 7 L6.5 1.3 L12.2 7" stroke="#fff" stroke-width="1.3" fill="none"/></svg>
<svg style="left:1714px;top:14px" width="16" height="13" viewBox="0 0 16 13"><path d="M3.5 0.6 H15.4 V9 H3.5 Z" stroke="#fff" stroke-width="1.1" fill="none"/><path d="M6 12.4 H13 M9.5 9 V12.4" stroke="#fff" stroke-width="1.1"/><path d="M0.6 1.8 H4.4 V5.6 H0.6 Z" fill="#020202" stroke="#fff" stroke-width="1"/><path d="M2.5 5.6 V8" stroke="#fff" stroke-width="1"/></svg>
<svg style="left:1738px;top:14px" width="17" height="13" viewBox="0 0 17 13"><path d="M0.6 4.3 H3.2 L6.6 1 V12 L3.2 8.7 H0.6 Z" stroke="#fff" stroke-width="1.1" fill="none" stroke-linejoin="round"/><path d="M9 4.2 Q10.6 6.5 9 8.8 M11.4 2.6 Q14 6.5 11.4 10.4 M13.8 1 Q17.4 6.5 13.8 12" stroke="#fff" stroke-width="1.1" fill="none"/></svg>
<svg style="left:1762px;top:12px" width="16" height="16" viewBox="0 0 16 16"><path d="M0 0 H16 V11.6 H10.4 L8 14.6 L5.6 11.6 H0 Z" fill="#fff"/><path d="M2.8 3.2 H13.2 M2.8 5.8 H13.2 M2.8 8.4 H9.5" stroke="#020202" stroke-width="1.2"/></svg>
<span class="abs" style="left:1787px;top:10px;font-size:13.5px;line-height:20px;color:#fff;white-space:nowrap;font-family:'Noto Sans CJK SC',sans-serif">英</span>
<svg style="left:1812px;top:11px" width="20" height="18" viewBox="0 0 20 18"><g transform="rotate(-12 10 9)"><rect x="2" y="1.5" width="16" height="15" rx="2.5" fill="#e8491d"/><path d="M14.3 5.2 Q10 3.2 6.8 5 Q4.6 7 8 8.4 L12 9.6 Q14.6 10.8 12.6 12.6 Q9.4 14.2 5.6 12.2" stroke="#fff" stroke-width="2.3" fill="none" stroke-linecap="round"/></g></svg>
<span class="abs" style="left:1862.5px;top:2.5px;font-size:12.4px;line-height:17px;color:#fff;white-space:nowrap">10:30</span>
<span class="abs" style="left:1848.5px;top:20px;font-size:12.4px;line-height:17px;color:#fff;white-space:nowrap;letter-spacing:0.35px">2022/4/21</span>
<div class="abs" style="left:1915px;top:0;width:1px;height:40px;background:#5a5a5a"></div>
</div>

<!-- red frame -->
<div class="abs" style="z-index:10;left:0;top:0;width:1920px;height:1px;background:#ffd9d9"></div>
<div class="abs" style="z-index:10;left:0;top:1px;width:1920px;height:1px;background:#9a3535"></div>
<div class="abs" style="z-index:10;left:0;top:0;width:1px;height:1040px;background:#ffc9c9"></div>
<div class="abs" style="z-index:10;left:1px;top:0;width:1px;height:1040px;background:#9a3535"></div>
<div class="abs" style="z-index:10;left:1918px;top:0;width:1px;height:1040px;background:#9a3535"></div>
<div class="abs" style="z-index:10;left:1919px;top:0;width:1px;height:1040px;background:#ffc9c9"></div>
<div class="abs" style="z-index:10;left:0;top:0;width:12px;height:2px;background:#ff0000"></div>
<div class="abs" style="z-index:10;left:0;top:0;width:2px;height:12px;background:#ff0000"></div>
<div class="abs" style="z-index:10;left:1907px;top:0;width:13px;height:2px;background:#ff0000"></div>
<div class="abs" style="z-index:10;left:1918px;top:0;width:2px;height:12px;background:#ff0000"></div>
<div class="abs" style="z-index:10;left:0;top:1029px;width:2px;height:11px;background:#ff0000"></div>
<div class="abs" style="z-index:10;left:1917px;top:1026px;width:3px;height:14px;background:#ff0000"></div>
</body>
</html>
